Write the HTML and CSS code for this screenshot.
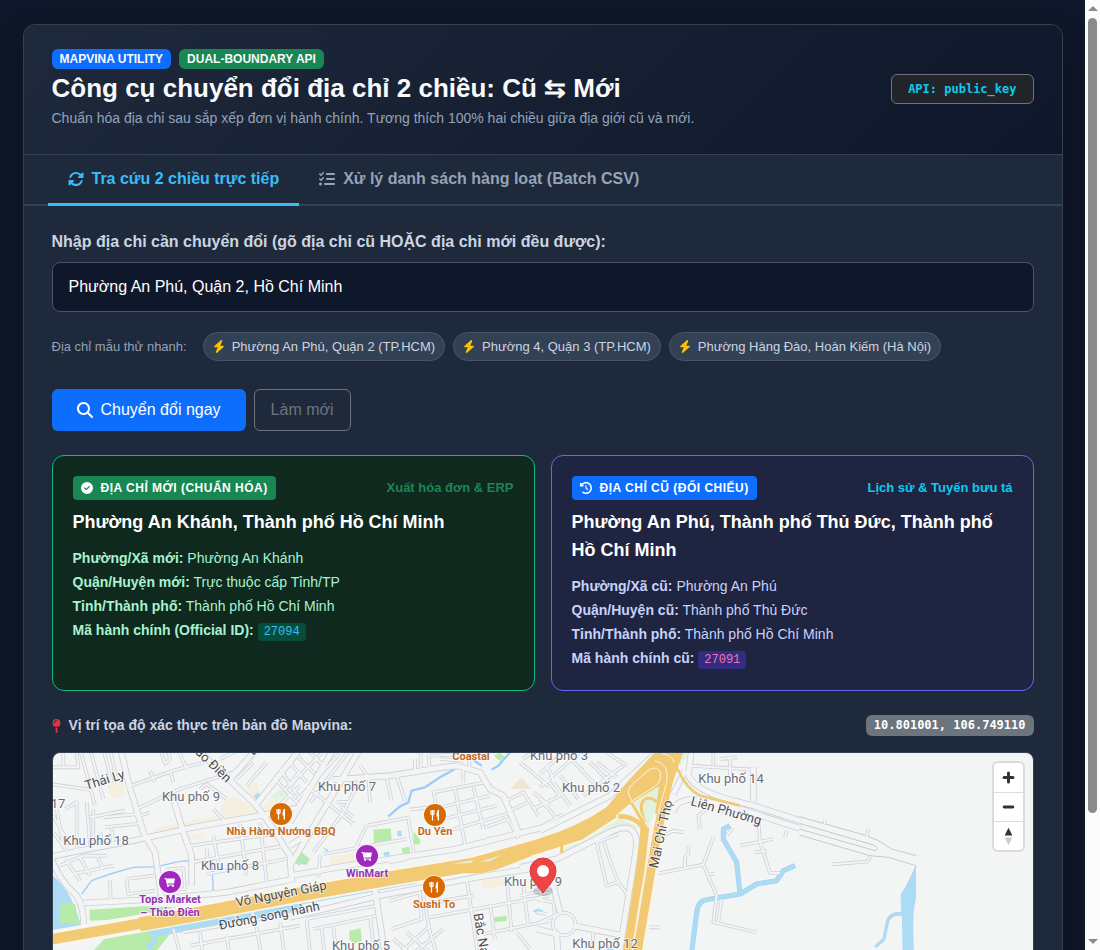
FILE: index.html
```html
<!DOCTYPE html>
<html lang="vi">
<head>
  <meta charset="UTF-8">
  <meta name="viewport" content="width=device-width, initial-scale=1.0">
  <title>Công cụ chuyển đổi địa chỉ 2 chiều</title>
  <link rel="stylesheet" href="styles.css">
</head>
<body>
  <!-- Icon dùng chung -->
  <svg class="sprite" aria-hidden="true">
    <symbol id="i-rotate" viewBox="0 0 512 512"><path d="M142.9 142.9c62.2-62.2 162.7-62.5 225.3-1L327 183c-6.9 6.9-8.9 17.2-5.2 26.2s12.5 14.8 22.2 14.8H472c13.3 0 24-10.7 24-24V72c0-9.7-5.8-18.5-14.8-22.2s-19.3-1.7-26.2 5.2L413.4 96.6c-87.6-86.5-228.7-86.2-315.8 1C73.2 122 55.6 150.7 44.8 181.4c-5.9 16.7 2.9 34.9 19.5 40.8s34.9-2.9 40.8-19.5c7.7-21.8 20.2-42.3 37.8-59.8zM16 312V440c0 9.7 5.8 18.5 14.8 22.2s19.3 1.7 26.2-5.2l41.6-41.6c87.6 86.5 228.7 86.2 315.8-1c24.4-24.4 42.1-53.1 52.9-83.7c5.9-16.7-2.9-34.9-19.5-40.8s-34.9 2.9-40.8 19.5c-7.7 21.8-20.2 42.3-37.8 59.8c-62.2 62.2-162.7 62.5-225.3 1L185 329c6.9-6.9 8.9-17.2 5.2-26.2s-12.5-14.8-22.2-14.8H40c-13.3 0-24 10.7-24 24z"/></symbol>
    <symbol id="i-list" viewBox="0 0 512 512"><path d="M152.1 38.2c9.9 8.9 10.7 24 1.8 33.9l-72 80c-4.4 4.9-10.6 7.8-17.2 7.9s-12.9-2.4-17.6-7L7 113C-2.3 103.6-2.3 88.4 7 79s24.6-9.4 33.9 0l22.1 22.1 55.1-61.2c8.9-9.9 24-10.7 33.9-1.8zm0 160c9.9 8.9 10.7 24 1.8 33.9l-72 80c-4.4 4.9-10.6 7.8-17.2 7.9s-12.9-2.4-17.6-7L7 273c-9.4-9.4-9.4-24.6 0-33.9s24.6-9.4 33.9 0l22.1 22.1 55.1-61.2c8.9-9.9 24-10.7 33.9-1.8zM224 96c0-17.7 14.3-32 32-32H480c17.7 0 32 14.3 32 32s-14.3 32-32 32H256c-17.7 0-32-14.3-32-32zm0 160c0-17.7 14.3-32 32-32H480c17.7 0 32 14.3 32 32s-14.3 32-32 32H256c-17.7 0-32-14.3-32-32zM160 416c0-17.7 14.3-32 32-32H480c17.7 0 32 14.3 32 32s-14.3 32-32 32H192c-17.7 0-32-14.3-32-32zM48 368a48 48 0 1 1 0 96 48 48 0 1 1 0-96z"/></symbol>
    <symbol id="i-bolt" viewBox="0 0 448 512"><path d="M349.4 44.6c5.9-13.7 1.5-29.7-10.6-38.5s-28.6-8-39.9 1.8l-256 224c-10 8.8-13.6 22.9-8.9 35.3S50.7 288 64 288H175.5L98.6 467.4c-5.9 13.7-1.5 29.7 10.6 38.5s28.6 8 39.9-1.8l256-224c10-8.8 13.6-22.9 8.9-35.3s-16.6-20.7-30-20.7H272.5L349.4 44.6z"/></symbol>
    <symbol id="i-search" viewBox="0 0 512 512"><path d="M416 208c0 45.9-14.9 88.3-40 122.7L502.6 457.4c12.5 12.5 12.5 32.8 0 45.3s-32.8 12.5-45.3 0L330.7 376c-34.4 25.2-76.8 40-122.7 40C93.1 416 0 322.9 0 208S93.1 0 208 0S416 93.1 416 208zM208 352a144 144 0 1 0 0-288 144 144 0 1 0 0 288z"/></symbol>
    <symbol id="i-check" viewBox="0 0 512 512"><path d="M256 512A256 256 0 1 0 256 0a256 256 0 1 0 0 512zM369 209L241 337c-9.4 9.4-24.6 9.4-33.9 0l-64-64c-9.4-9.4-9.4-24.6 0-33.9s24.6-9.4 33.9 0l47 47L335 175c9.4-9.4 24.6-9.4 33.9 0s9.4 24.6 0 33.9z"/></symbol>
    <symbol id="i-history" viewBox="0 0 512 512"><path d="M75 75L41 41C25.9 25.9 0 36.6 0 57.9V168c0 13.3 10.7 24 24 24H134.1c21.4 0 32.1-25.9 17-41l-30.8-30.8C155 85.5 203 64 256 64c106 0 192 86 192 192s-86 192-192 192c-40.8 0-78.6-12.7-109.7-34.4c-14.5-10.1-34.4-6.6-44.6 7.9s-6.6 34.4 7.9 44.6C151.2 495 201.7 512 256 512c141.4 0 256-114.6 256-256S397.4 0 256 0C185.3 0 121.3 28.7 75 75zm181 53c-13.3 0-24 10.7-24 24V256c0 6.4 2.5 12.5 7 17l72 72c9.4 9.4 24.6 9.4 33.9 0s9.4-24.6 0-33.9l-65-65V152c0-13.3-10.7-24-24-24z"/></symbol>
    <symbol id="i-pin" viewBox="0 0 320 512"><path d="M16 144a144 144 0 1 1 288 0A144 144 0 1 1 16 144zM160 80c8.8 0 16-7.2 16-16s-7.2-16-16-16c-53 0-96 43-96 96c0 8.8 7.2 16 16 16s16-7.2 16-16c0-35.3 28.7-64 64-64zM128 480V317.1c10.4 1.9 21.1 2.9 32 2.9s21.6-1 32-2.9V480c0 17.7-14.3 32-32 32s-32-14.3-32-32z"/></symbol>
    <symbol id="i-food" viewBox="-11 -11 22 22" overflow="visible">
      <circle r="12" fill="#fff" opacity=".6"/><circle r="11" fill="#d96a00"/>
      <path d="M-4 -5v3.500q0 1.500 1.500 1.500q1.500 0 1.500 -1.500V-5M-2.500 -5V5.500" fill="none" stroke="#fff" stroke-width="1.200"/>
      <path d="M4 5.500H2.600V1.500H1.600Q1.300 -4.500 4 -5.500z" fill="#fff"/>
    </symbol>
    <symbol id="i-cart" viewBox="-11 -11 22 22" overflow="visible">
      <circle r="12" fill="#fff" opacity=".6"/><circle r="11" fill="#a127bd"/>
      <path d="M-4.500 -3.500H5L4 1.500H-3z" fill="#fff"/>
      <path d="M-5.500 -3.500H-4L-2.500 3H4" fill="none" stroke="#fff"/>
      <circle cx="-2" cy="4" r="1" fill="#fff"/><circle cx="3" cy="4" r="1" fill="#fff"/>
    </symbol>
  </svg>

  <main class="app-card">
    <header class="app-header">
      <div>
        <div class="badges">
          <span class="badge badge-blue">MAPVINA UTILITY</span>
          <span class="badge badge-green">DUAL-BOUNDARY API</span>
        </div>
        <h1>Công cụ chuyển đổi địa chỉ 2 chiều: Cũ ⇆ Mới</h1>
        <p>Chuẩn hóa địa chỉ sau sắp xếp đơn vị hành chính. Tương thích 100% hai chiều giữa địa giới cũ và mới.</p>
      </div>
      <span class="api-key">API: public_key</span>
    </header>

    <nav class="tabs">
      <button type="button" class="tab active"><svg class="icon"><use href="#i-rotate"/></svg>Tra cứu 2 chiều trực tiếp</button>
      <button type="button" class="tab"><svg class="icon"><use href="#i-list"/></svg>Xử lý danh sách hàng loạt (Batch CSV)</button>
    </nav>

    <div class="app-body">
      <form>
        <label class="field-label" for="address">Nhập địa chỉ cần chuyển đổi (gõ địa chỉ cũ HOẶC địa chỉ mới đều được):</label>
        <input class="field" type="text" id="address" value="Phường An Phú, Quận 2, Hồ Chí Minh">

        <div class="samples">
          <span class="samples-label">Địa chỉ mẫu thử nhanh:</span>
          <button type="button" class="chip"><svg class="icon"><use href="#i-bolt"/></svg>Phường An Phú, Quận 2 (TP.HCM)</button>
          <button type="button" class="chip"><svg class="icon"><use href="#i-bolt"/></svg>Phường 4, Quận 3 (TP.HCM)</button>
          <button type="button" class="chip"><svg class="icon"><use href="#i-bolt"/></svg>Phường Hàng Đào, Hoàn Kiếm (Hà Nội)</button>
        </div>

        <div class="actions">
          <button type="button" class="btn btn-primary"><svg class="icon"><use href="#i-search"/></svg>Chuyển đổi ngay</button>
          <button type="reset" class="btn btn-outline">Làm mới</button>
        </div>
      </form>

      <div class="results">
        <section class="result result-new">
          <div class="result-head">
            <span class="tag"><svg class="icon"><use href="#i-check"/></svg>ĐỊA CHỈ MỚI (CHUẨN HÓA)</span>
            <span class="note">Xuất hóa đơn &amp; ERP</span>
          </div>
          <h2>Phường An Khánh, Thành phố Hồ Chí Minh</h2>
          <p><strong>Phường/Xã mới:</strong> Phường An Khánh</p>
          <p><strong>Quận/Huyện mới:</strong> Trực thuộc cấp Tỉnh/TP</p>
          <p><strong>Tỉnh/Thành phố:</strong> Thành phố Hồ Chí Minh</p>
          <p><strong>Mã hành chính (Official ID):</strong> <code>27094</code></p>
        </section>
        <section class="result result-old">
          <div class="result-head">
            <span class="tag"><svg class="icon"><use href="#i-history"/></svg>ĐỊA CHỈ CŨ (ĐỐI CHIẾU)</span>
            <span class="note">Lịch sử &amp; Tuyến bưu tá</span>
          </div>
          <h2>Phường An Phú, Thành phố Thủ Đức, Thành phố Hồ Chí Minh</h2>
          <p><strong>Phường/Xã cũ:</strong> Phường An Phú</p>
          <p><strong>Quận/Huyện cũ:</strong> Thành phố Thủ Đức</p>
          <p><strong>Tỉnh/Thành phố:</strong> Thành phố Hồ Chí Minh</p>
          <p><strong>Mã hành chính cũ:</strong> <code>27091</code></p>
        </section>
      </div>

      <div class="map-head">
        <h3><svg class="icon"><use href="#i-pin"/></svg>Vị trí tọa độ xác thực trên bản đồ Mapvina:</h3>
        <span class="coords">10.801001, 106.749110</span>
      </div>

      <div class="map">
        <svg class="map-canvas" viewBox="0 0 980 280" preserveAspectRatio="xMidYMin slice" role="img" aria-label="Bản đồ">
          <defs>
            <g id="roads">
              <g transform="translate(-39 -162)">
                <path d="M0 480L120 455 280 425 460 385 660 350 780 325M240 140L265 250 310 400 345 460 365 600M470 150L560 235 650 320 700 390 750 470 755 550M20 440Q50 540 110 590Q135 630 130 700M130 612L360 600 560 580 760 540M570 240L650 150M650 315L780 150M400 300L430 400 455 470 455 560"/>
              </g>
              <g transform="translate(711 -162)">
                <path d="M0 530L200 495 500 450 780 380M0 655L270 590 560 535 780 500M130 242L300 230 460 205 500 200 570 220 600 270 640 290 690 410M0 500L210 150M0 370L130 150M0 440L60 400M250 540L290 800"/>
              </g>
              <g transform="translate(1461 -162)">
                <path d="M-60 505L50 480 210 400Q290 360 290 440L240 750 232 800M455 150L445 230Q470 280 600 310L640 320 780 365M600 330L780 388M640 205V310M400 340Q405 300 470 300M400 285L435 215M40 560L60 640M100 680L250 710M-10 690L50 705 55 780M340 170L210 290 0 395"/>
              </g>
            </g>
            <g id="lanes">
              <g transform="translate(-39 -162)">
                <path d="M30 205H115L108 150M70 150V205M30 255L150 272M120 150L165 320M150 150L190 300M190 150L215 250M210 150L228 235M75 330L110 310V450M150 355L255 335M160 440V330M190 355L300 345M195 385L310 372M260 265L400 215 490 190M290 330L420 270 580 220M330 215L345 250M390 215L400 250M420 165L440 210M360 150L375 195 390 180 383 150M450 440L740 400M455 490L735 440M520 410L540 520M600 375L620 530M660 370L680 550M500 525L740 480M260 540L342 530M260 540L265 585 345 575M210 545L212 600M380 512L430 507 435 570 390 572M60 500L130 470 200 470M100 525L220 500M75 480L120 545M120 475L150 530M170 470L190 510M40 350L90 440M40 400L80 455M50 330L70 440M140 310L150 440M180 400L190 445M215 390L220 430M300 350L330 340M700 235L780 320M690 345L780 260M735 275L780 215M720 210L780 300M540 180L600 150M590 240L640 190M620 260L680 190M480 270L500 255 560 300M520 330L550 362M400 690L425 780M430 700L780 640M450 740L780 680M480 700L490 780M630 615L642 660M650 685L665 780M560 710L570 780M720 670L735 780M500 450L505 500"/>
              </g>
              <g transform="translate(711 -162)">
                <path d="M50 262L190 375M150 320L190 355M140 310L180 308M215 232L160 340 70 460M290 235L305 305M320 230L345 305M235 240L240 310M375 180V225M392 160V222M415 165L420 215M430 280L585 250M430 330L600 290M360 332L440 322M440 365L620 320M460 400L650 345M495 265L525 440M550 262L580 390M430 272L440 340M90 470L85 535M230 380L360 355M230 380L195 450M355 360L372 465M100 465L350 420M120 510L350 470M640 310L700 280 745 350M660 335L710 312M730 280L780 320M690 190L780 265M0 190L50 250M20 170L75 225M50 150L100 200M0 260L95 162M15 310L150 162M60 310L180 150M585 385L655 360 685 420M590 420L680 405M700 180L740 150M420 170L530 165M530 150L540 205M450 180L520 185M210 200L240 240M300 605L390 580 395 660 305 690M50 660L260 620M50 660L62 780M70 690L260 650M95 685L105 780M130 680L140 780M240 650L255 780M400 590L420 700 445 780M310 780L420 680M350 780L460 690M310 720L380 780M350 700L420 760M530 540L545 640 565 780M430 610L550 590M420 655L780 590M600 615L615 720M650 535L665 700M580 705L780 665M700 560L715 680M740 500L755 610M680 700L720 750M690 590L780 570M300 490L350 480M520 250V200"/>
              </g>
              <g transform="translate(1461 -162)">
                <path d="M0 225L60 170M0 265L130 150M60 230L115 300M130 290L250 200M-20 330L60 290 20 240M10 380L70 345M0 300L60 370M120 210L180 270M150 190L210 250M170 190L230 235M40 250L90 320M20 200L40 240M200 160L260 200M90 180L130 215M170 430L200 560 235 550 265 590M192 430L215 500 235 550M170 430L235 405M345 525L490 497 520 415M490 497L530 590 520 670 650 700M545 600L535 670M435 505V475L445 465V440M370 410L400 395 430 400M600 440L700 420M655 360L660 430 690 522H720M645 460L680 455M450 200L640 212M520 150V200M540 180L590 175M570 180V235M480 390L475 350 500 330M-10 600L40 610 45 650 0 670M-10 640L20 645M310 685H358M735 415L740 395M560 410L580 385M160 700L155 780M510 525H525M540 345L550 330"/>
                <circle cx="72" cy="675" r="34"/>
              </g>
              <g transform="translate(2211 -162)">
                <path d="M125 496L230 488 242 472M104 375L106 364M230 412L236 390"/>
              </g>
            </g>
          </defs>

          <g transform="scale(.33333)">
            <!-- Khu đất, cây xanh -->
            <g transform="translate(-39 -162)">
              <path class="sand" d="M200 250L245 240 260 285 215 300zM350 385L530 350 535 375 330 412zM540 325L580 290 640 320 650 345 550 365zM620 265L650 250 670 300 640 310zM665 330L700 290 745 300 690 370zM315 430L330 425 330 455 315 455zM440 405L500 400 490 420 430 428z"/>
              <path class="mint" d="M690 290L725 270 745 285 705 305z"/>
              <path class="water" d="M39 530Q100 580 125 690L39 705zM640 292L655 280 662 292 650 300z"/>
              <path class="grass" d="M62 612L105 615 118 675 60 672zM760 490L782 450V500zM148 632L310 622 410 625 290 650 210 662 150 665zM160 755L200 712 395 668 390 705 350 755z"/>
              <path class="river" stroke-width="24" d="M330 703L480 678 780 622"/>
              <path class="stream" stroke-width="4" d="M125 585L155 545 210 525 280 505 350 503 420 487 515 480 520 580"/>
              <path class="water" d="M315 740L350 712 355 722 330 755z"/>
            </g>
            <g transform="translate(711 -162)">
              <path class="sand" d="M120 475L200 460 205 490 125 510zM575 545L640 535 642 560 580 570z"/>
              <path class="tan" d="M660 270L695 235 722 270z"/>
              <path class="grass" d="M250 392L302 388 305 422 252 432zM372 398L392 425 388 437 370 435zM335 448L358 443 360 462 338 465zM10 490L32 458 60 480 50 498zM178 695L212 688 216 725 190 735 178 720zM612 655L650 650V665L614 670zM612 170L630 160 645 175 628 185z"/>
              <path class="water" d="M322 395H335V412H322zM280 460L298 458V470H282zM30 482L50 490 40 497zM98 445L115 452 112 460zM728 635L745 628 757 635 740 645z"/>
              <path class="river" stroke-width="17" d="M0 614L380 545"/>
              <path class="stream" stroke-width="7" d="M295 352L330 322 355 310 365 275 405 265 450 235 495 210M605 212L625 200 660 160M520 162L575 200"/>
            </g>
            <g transform="translate(1461 -162)">
              <path class="mint" d="M60 465L100 425 230 355 300 385 200 400zM275 310L357 262 345 370 300 330zM420 200L450 160H420z"/>
              <path class="stream" stroke-width="15" d="M455 760L470 640Q475 604 500 602L600 585 650 555 710 545 730 515 765 500M600 585L590 490 550 420V390L570 380"/>
              <path class="river" stroke-width="12" d="M455 760L470 640Q475 604 500 602L600 585 650 555 710 545 730 515 765 500M600 585L590 490 550 420V390L570 380"/>
              <path class="grass" d="M228 715L245 712V735H230z"/>
              <path class="water" d="M0 635L8 630V640zM200 742H220V760H200z"/>
            </g>
            <g transform="translate(2211 -162)">
              <path class="water" d="M378 500V600Q365 640 372 760H338L334 585 350 560z"/>
              <path class="river" stroke-width="10" d="M338 646Q300 640 292 670L282 720 256 744"/>
              <path class="edge" d="M28 353L230 410 265 425 305 450 378 470M28 373L250 438Q272 450 255 455L28 390M28 408L240 470 295 475 378 500"/>
              <path class="stream" stroke-width="2" d="M378 500L350 560 334 585V640Q296 640 290 665"/>
            </g>

            <!-- Đường phố -->
            <use href="#lanes" class="lane-case"/>
            <use href="#roads" class="road-case"/>
            <use href="#lanes" class="lane-fill"/>
            <use href="#roads" class="road-fill"/>

            <!-- Cao tốc -->
            <path class="highway-case" d="M-20 562L260 512 440 480 720 428 1000 378 1260 335 1461 280 1580 240 1680 175"/>
            <path class="highway" d="M-20 562L260 512 440 480"/>
            <path class="highway wide" d="M260 514L440 482 720 428 1000 378 1260 335 1461 278 1580 240 1680 175"/>
            <g transform="translate(711 -162)">
              <path class="ramp" stroke-width="24" d="M470 500Q560 525 630 495L720 460"/>
              <path class="mint" d="M485 494L550 484 545 492zM570 488L635 468 600 486z"/>
            </g>
            <g transform="translate(1461 -162)">
              <path class="trunk-case" d="M375 290L345 430 310 640 288 770"/>
              <path class="mint" d="M275 310L357 262 345 340 325 385 290 350z"/>
              <path class="fill-yellow" d="M0 418Q110 385 200 325L265 245 350 155H432L398 250 378 340 345 345 357 262 262 320Q150 420 0 460z"/>
              <path class="ramp" stroke-width="26" d="M404 170L375 290 347 430 312 640 290 770M315 385L300 520 260 770"/>
              <path class="ramp" stroke-width="14" d="M235 352Q290 350 315 395"/>
              <path class="ramp" stroke-width="9" d="M65 435V462M268 300L320 390M316 370Q290 310 320 298Q340 295 350 310"/>
              <path class="ramp" stroke-width="8" d="M380 165L415 215Q440 270 480 290L600 320"/>
              <path class="split" d="M322 375L270 295Q258 275 275 258L330 210Q355 200 362 222Q365 245 345 262L270 310M345 185Q390 195 380 250L355 340M365 165Q395 165 402 190M334 420L300 600 274 770"/>
            </g>
          </g>

          <g class="place">
            <text x="5" y="55">17</text>
            <text x="138" y="48">Khu phố 9</text>
            <text x="43" y="92">Khu phố 18</text>
            <text x="177" y="117">Khu phố 8</text>
            <text x="294" y="38">Khu phố 7</text>
            <text x="506" y="7">Khu phố 3</text>
            <text x="538" y="39">Khu phố 2</text>
            <text x="678" y="30">Khu phố 14</text>
            <text x="308" y="197">Khu phố 5</text>
            <text x="552" y="195">Khu phố 12</text>
            <text x="480" y="133">Khu phố 9</text>
          </g>
          <g class="street">
            <text transform="translate(53 31) rotate(-17)">Thái Ly</text>
            <text transform="translate(152 10) rotate(44)">Thảo Điền</text>
            <text transform="translate(203 0) rotate(-50)">B</text>
            <text transform="translate(229 145) rotate(-11)">Võ Nguyên Giáp</text>
            <text transform="translate(217 167) rotate(-11)">Đường song hành</text>
            <text transform="translate(612 82) rotate(-78)">Mai Chí Thọ</text>
            <text transform="translate(672 62) rotate(16)">Liên Phường</text>
            <text transform="translate(425 187) rotate(80)">Bắc Nam</text>
          </g>
          <g class="poi poi-food">
            <text x="418" y="7">Coastal</text>
            <text x="228" y="82">Nhà Hàng Nướng BBQ</text>
            <text x="382" y="82">Du Yên</text>
            <text x="381" y="155">Sushi To</text>
          </g>
          <g class="poi poi-shop">
            <text x="314" y="124">WinMart</text>
            <text x="117" y="150">Tops Market</text>
            <text x="117" y="163">– Thảo Điền</text>
          </g>
          <use href="#i-food" x="217" y="50" width="22" height="22"/>
          <use href="#i-food" x="371" y="51" width="22" height="22"/>
          <use href="#i-food" x="370" y="123" width="22" height="22"/>
          <use href="#i-cart" x="303" y="92" width="22" height="22"/>
          <use href="#i-cart" x="106" y="118" width="22" height="22"/>

          <!-- Điểm đánh dấu -->
          <ellipse cx="490" cy="138" rx="10" ry="5" fill="#000" opacity=".15"/>
          <path d="M490 140L482 130Q477 124 477 118A13 13 0 0 1 503 118Q503 124 498 130z" fill="#f04343" stroke="#d23c3c"/>
          <circle cx="490" cy="118" r="6" fill="#fff"/>
        </svg>
        <div class="map-ctrl">
          <button type="button" aria-label="Phóng to"><svg viewBox="0 0 29 29"><path d="M14.500 10V19M10 14.500H19" stroke="#333" stroke-width="3" stroke-linecap="round"/></svg></button>
          <button type="button" aria-label="Thu nhỏ"><svg viewBox="0 0 29 29"><path d="M10 14.500H19" stroke="#333" stroke-width="3" stroke-linecap="round"/></svg></button>
          <button type="button" aria-label="Hướng bắc"><svg viewBox="0 0 29 29"><path d="M10.500 14L14.500 6 18.500 14z" fill="#333"/><path d="M10.500 16L14.500 24 18.500 16z" fill="#ccc"/></svg></button>
        </div>
      </div>
    </div>
  </main>

  <!-- Thanh cuộn -->
  <div class="scrollbar" aria-hidden="true">
    <span class="arrow arrow-up"></span>
    <div class="track"><div class="thumb"></div></div>
    <span class="arrow arrow-down"></span>
  </div>
</body>
</html>
```
FILE: styles.css
```css
* {
  margin: 0;
  padding: 0;
  box-sizing: border-box;
}

html {
  scrollbar-width: none;
}

body {
  font-family: "Liberation Sans", Arial, sans-serif;
  font-size: 16px;
  line-height: 24px;
  background-color: #0f172a;
  color: #f8fafc;
  padding: 24px 31px 24px 16px;
}

button, input {
  font: inherit;
}

button {
  cursor: pointer;
}

.sprite {
  position: absolute;
  width: 0;
  height: 0;
}

.icon {
  width: 16px;
  height: 16px;
  fill: currentColor;
  flex-shrink: 0;
}

.app-card {
  max-width: 1040px;
  margin: 0 auto;
  background-color: #1e293b;
  border: 1px solid #334155;
  border-radius: 12px;
  box-shadow: 0 10px 30px rgba(0, 0, 0, 0.3);
  overflow: hidden;
}

/* Header */
.app-header {
  display: flex;
  align-items: center;
  justify-content: space-between;
  gap: 24px;
  padding: 24px 28px 26px;
  background: linear-gradient(135deg, #1e293b 0%, #0f172a 100%);
  border-bottom: 1px solid #334155;
}

.badges {
  display: flex;
  gap: 8px;
  height: 24px;
  align-items: flex-start;
}

.badge {
  padding: 4px 8px;
  border-radius: 6px;
  font-size: 12px;
  line-height: 12px;
  font-weight: bold;
}

.badge-blue {
  background-color: #0d6efd;
}

.badge-green {
  background-color: #198754;
}

.app-header h1 {
  font-size: 26px;
  line-height: 31px;
  margin-bottom: 4px;
}

.app-header p {
  font-size: 14px;
  line-height: 20px;
  color: #94a3b8;
}

.api-key {
  padding: 8px 16px;
  background-color: #212529;
  border: 1px solid #6c757d;
  border-radius: 6px;
  color: #0dcaf0;
  font-family: "DejaVu Sans Mono", monospace;
  font-size: 12px;
  line-height: 12px;
  font-weight: bold;
  white-space: nowrap;
}

/* Tabs */
.tabs {
  display: flex;
  padding: 0 24px;
  border-bottom: 2px solid #334155;
}

.tab {
  display: flex;
  align-items: center;
  gap: 8px;
  margin-bottom: -2px;
  padding: 12px 20px;
  background: none;
  border: none;
  border-bottom: 3px solid transparent;
  color: #94a3b8;
  font-weight: bold;
}

.tab.active {
  color: #38bdf8;
  border-bottom-color: #38bdf8;
}

/* Form */
.app-body {
  padding: 24px 28px;
}

.field-label {
  display: block;
  margin-bottom: 8px;
  color: #cbd5e1;
  font-weight: bold;
}

.field {
  display: block;
  width: 100%;
  padding: 12px 16px;
  background-color: #0f172a;
  border: 1px solid #475569;
  border-radius: 8px;
  color: #fff;
}

.samples {
  display: flex;
  flex-wrap: wrap;
  align-items: center;
  gap: 8px;
  margin-top: 20px;
}

.samples-label {
  margin-right: 8px;
  color: #94a3b8;
  font-size: 13px;
}

.chip {
  display: flex;
  align-items: center;
  gap: 7px;
  padding: 4px 9px;
  background-color: #334155;
  border: 1px solid #475569;
  border-radius: 20px;
  color: #cbd5e1;
  font-size: 13px;
  line-height: 19px;
}

.chip .icon {
  width: 12px;
  height: 13px;
  color: #ffc107;
}

.actions {
  display: flex;
  gap: 8px;
  margin-top: 28px;
}

.btn {
  display: flex;
  align-items: center;
  gap: 8px;
  padding: 8px 16px;
  border: 1px solid transparent;
  border-radius: 6px;
}

.btn-primary {
  padding: 8px 24px;
  background-color: #0d6efd;
  color: #fff;
}

.btn-outline {
  background: none;
  border-color: #6c757d;
  color: #6c757d;
}

/* Results */
.results {
  display: grid;
  grid-template-columns: 1fr 1fr;
  gap: 16px;
  margin-top: 24px;
}

.result {
  padding: 20px;
  border: 1px solid;
  border-radius: 12px;
  font-size: 14px;
}

.result-new {
  background-color: #10291f;
  border-color: #10b981;
  color: #a7f3d0;
}

.result-old {
  background-color: #1f2540;
  border-color: #6366f1;
  color: #c7d2fe;
}

.result-head {
  display: flex;
  align-items: center;
  justify-content: space-between;
  margin-bottom: 8px;
}

.tag {
  display: flex;
  align-items: center;
  gap: 8px;
  padding: 0 8px;
  border-radius: 4px;
  color: #fff;
  font-size: 12px;
  font-weight: bold;
  letter-spacing: 0.5px;
}

.tag .icon {
  width: 12px;
  height: 12px;
}

.result-new .tag {
  background-color: #198754;
}

.result-old .tag {
  background-color: #0d6efd;
}

.note {
  font-size: 13px;
  font-weight: bold;
}

.result-new .note {
  color: #198754;
}

.result-old .note {
  color: #0dcaf0;
}

.result h2 {
  margin-bottom: 10px;
  color: #fff;
  font-size: 18px;
  line-height: 28px;
}

.result code {
  padding: 2px 6px;
  border-radius: 4px;
  font-family: "Liberation Mono", monospace;
  font-size: 12px;
  line-height: 12px;
}

.result-new code {
  background-color: #064e3b;
  color: #38bdf8;
}

.result-old code {
  background-color: #312e81;
  color: #f472b6;
}

/* Map */
.map-head {
  display: flex;
  align-items: center;
  justify-content: space-between;
  margin: 24px 0 16px;
}

.map-head h3 {
  display: flex;
  align-items: center;
  gap: 8px;
  color: #cbd5e1;
  font-size: 14px;
  line-height: 21px;
}

.map-head .icon {
  width: 9px;
  height: 14px;
  color: #dc3545;
}

.coords {
  padding: 4px 8px;
  background-color: #6c757d;
  border-radius: 6px;
  color: #fff;
  font-family: "DejaVu Sans Mono", monospace;
  font-size: 12px;
  line-height: 13px;
  font-weight: bold;
}

.map {
  position: relative;
  border: 1px solid #334155;
  border-radius: 8px;
  overflow: hidden;
  background-color: #f3f5f5;
}

.map-canvas {
  display: block;
  width: 100%;
  height: 280px;
}

.map-ctrl {
  position: absolute;
  top: 10px;
  right: 10px;
  border-radius: 4px;
  box-shadow: 0 0 0 2px rgba(0, 0, 0, 0.1);
  background-color: #fff;
}

.map-ctrl button {
  display: block;
  width: 29px;
  height: 29px;
  background: none;
  border: none;
}

.map-ctrl button + button {
  border-top: 1px solid #ddd;
}

.map-ctrl svg {
  display: block;
  width: 100%;
  height: 100%;
}

/* Map layers */
.sand { fill: #f5efe0; }
.tan { fill: #f0e4d3; }
.mint { fill: #e1f2de; }
.grass { fill: #b8eaaa; }
.water { fill: #abdcf3; }

.river,
.stream,
.ramp,
.edge,
.split,
.highway,
.highway-case,
.trunk-case,
.lane-case,
.lane-fill,
.road-case,
.road-fill {
  fill: none;
  stroke-linejoin: round;
}

.river { stroke: #abdcf3; }
.stream { stroke: #9fcbfa; }
.edge { stroke: #c6c8d2; stroke-width: 3; }
.lane-case { stroke: #d0d2db; stroke-width: 11; }
.lane-fill { stroke: #f3f5f5; stroke-width: 6; }
.road-case { stroke: #cdcfd8; stroke-width: 20; }
.road-fill { stroke: #f3f5f5; stroke-width: 15; }
.highway-case { stroke: #f8f6ee; stroke-width: 54; }
.highway { stroke: #f3ca74; stroke-width: 32; }
.highway.wide { stroke-width: 42; }
.trunk-case { stroke: #f8f4ea; stroke-width: 50; }
.ramp { stroke: #f3ca74; }
.fill-yellow { fill: #f3ca74; }
.split { stroke: #fbf3e0; stroke-width: 3; }

.map-canvas text {
  font-family: Roboto, sans-serif;
  text-anchor: middle;
  paint-order: stroke;
  stroke: rgba(255, 255, 255, 0.6);
  stroke-width: 2px;
}

.place {
  font-size: 13px;
  fill: #696d79;
}

.street {
  font-size: 13px;
  fill: #4b4e57;
}

.poi {
  font-size: 11px;
  font-weight: bold;
}

.poi-food { fill: #c66a22; }
.poi-shop { fill: #9233b5; }

/* Scrollbar */
.scrollbar {
  position: fixed;
  top: 0;
  right: 0;
  bottom: 0;
  width: 15px;
  display: flex;
  flex-direction: column;
  align-items: center;
  justify-content: space-between;
  gap: 7px;
  padding: 6px 0;
  background-color: #fcfcfc;
}

.track {
  flex: 1;
}

.thumb {
  width: 9px;
  height: 87%;
  border-radius: 5px;
  background-color: #8b8b8b;
}

.track {
  display: flex;
}

.arrow {
  border: 5px solid transparent;
}

.arrow-up {
  border-top: none;
  border-bottom-color: #8b8b8b;
}

.arrow-down {
  border-bottom: none;
  border-top-color: #8b8b8b;
}

@media (max-width: 768px) {
  .app-header {
    flex-direction: column;
    align-items: flex-start;
  }

  .tabs {
    flex-direction: column;
  }

  .results {
    grid-template-columns: 1fr;
  }
}
```
